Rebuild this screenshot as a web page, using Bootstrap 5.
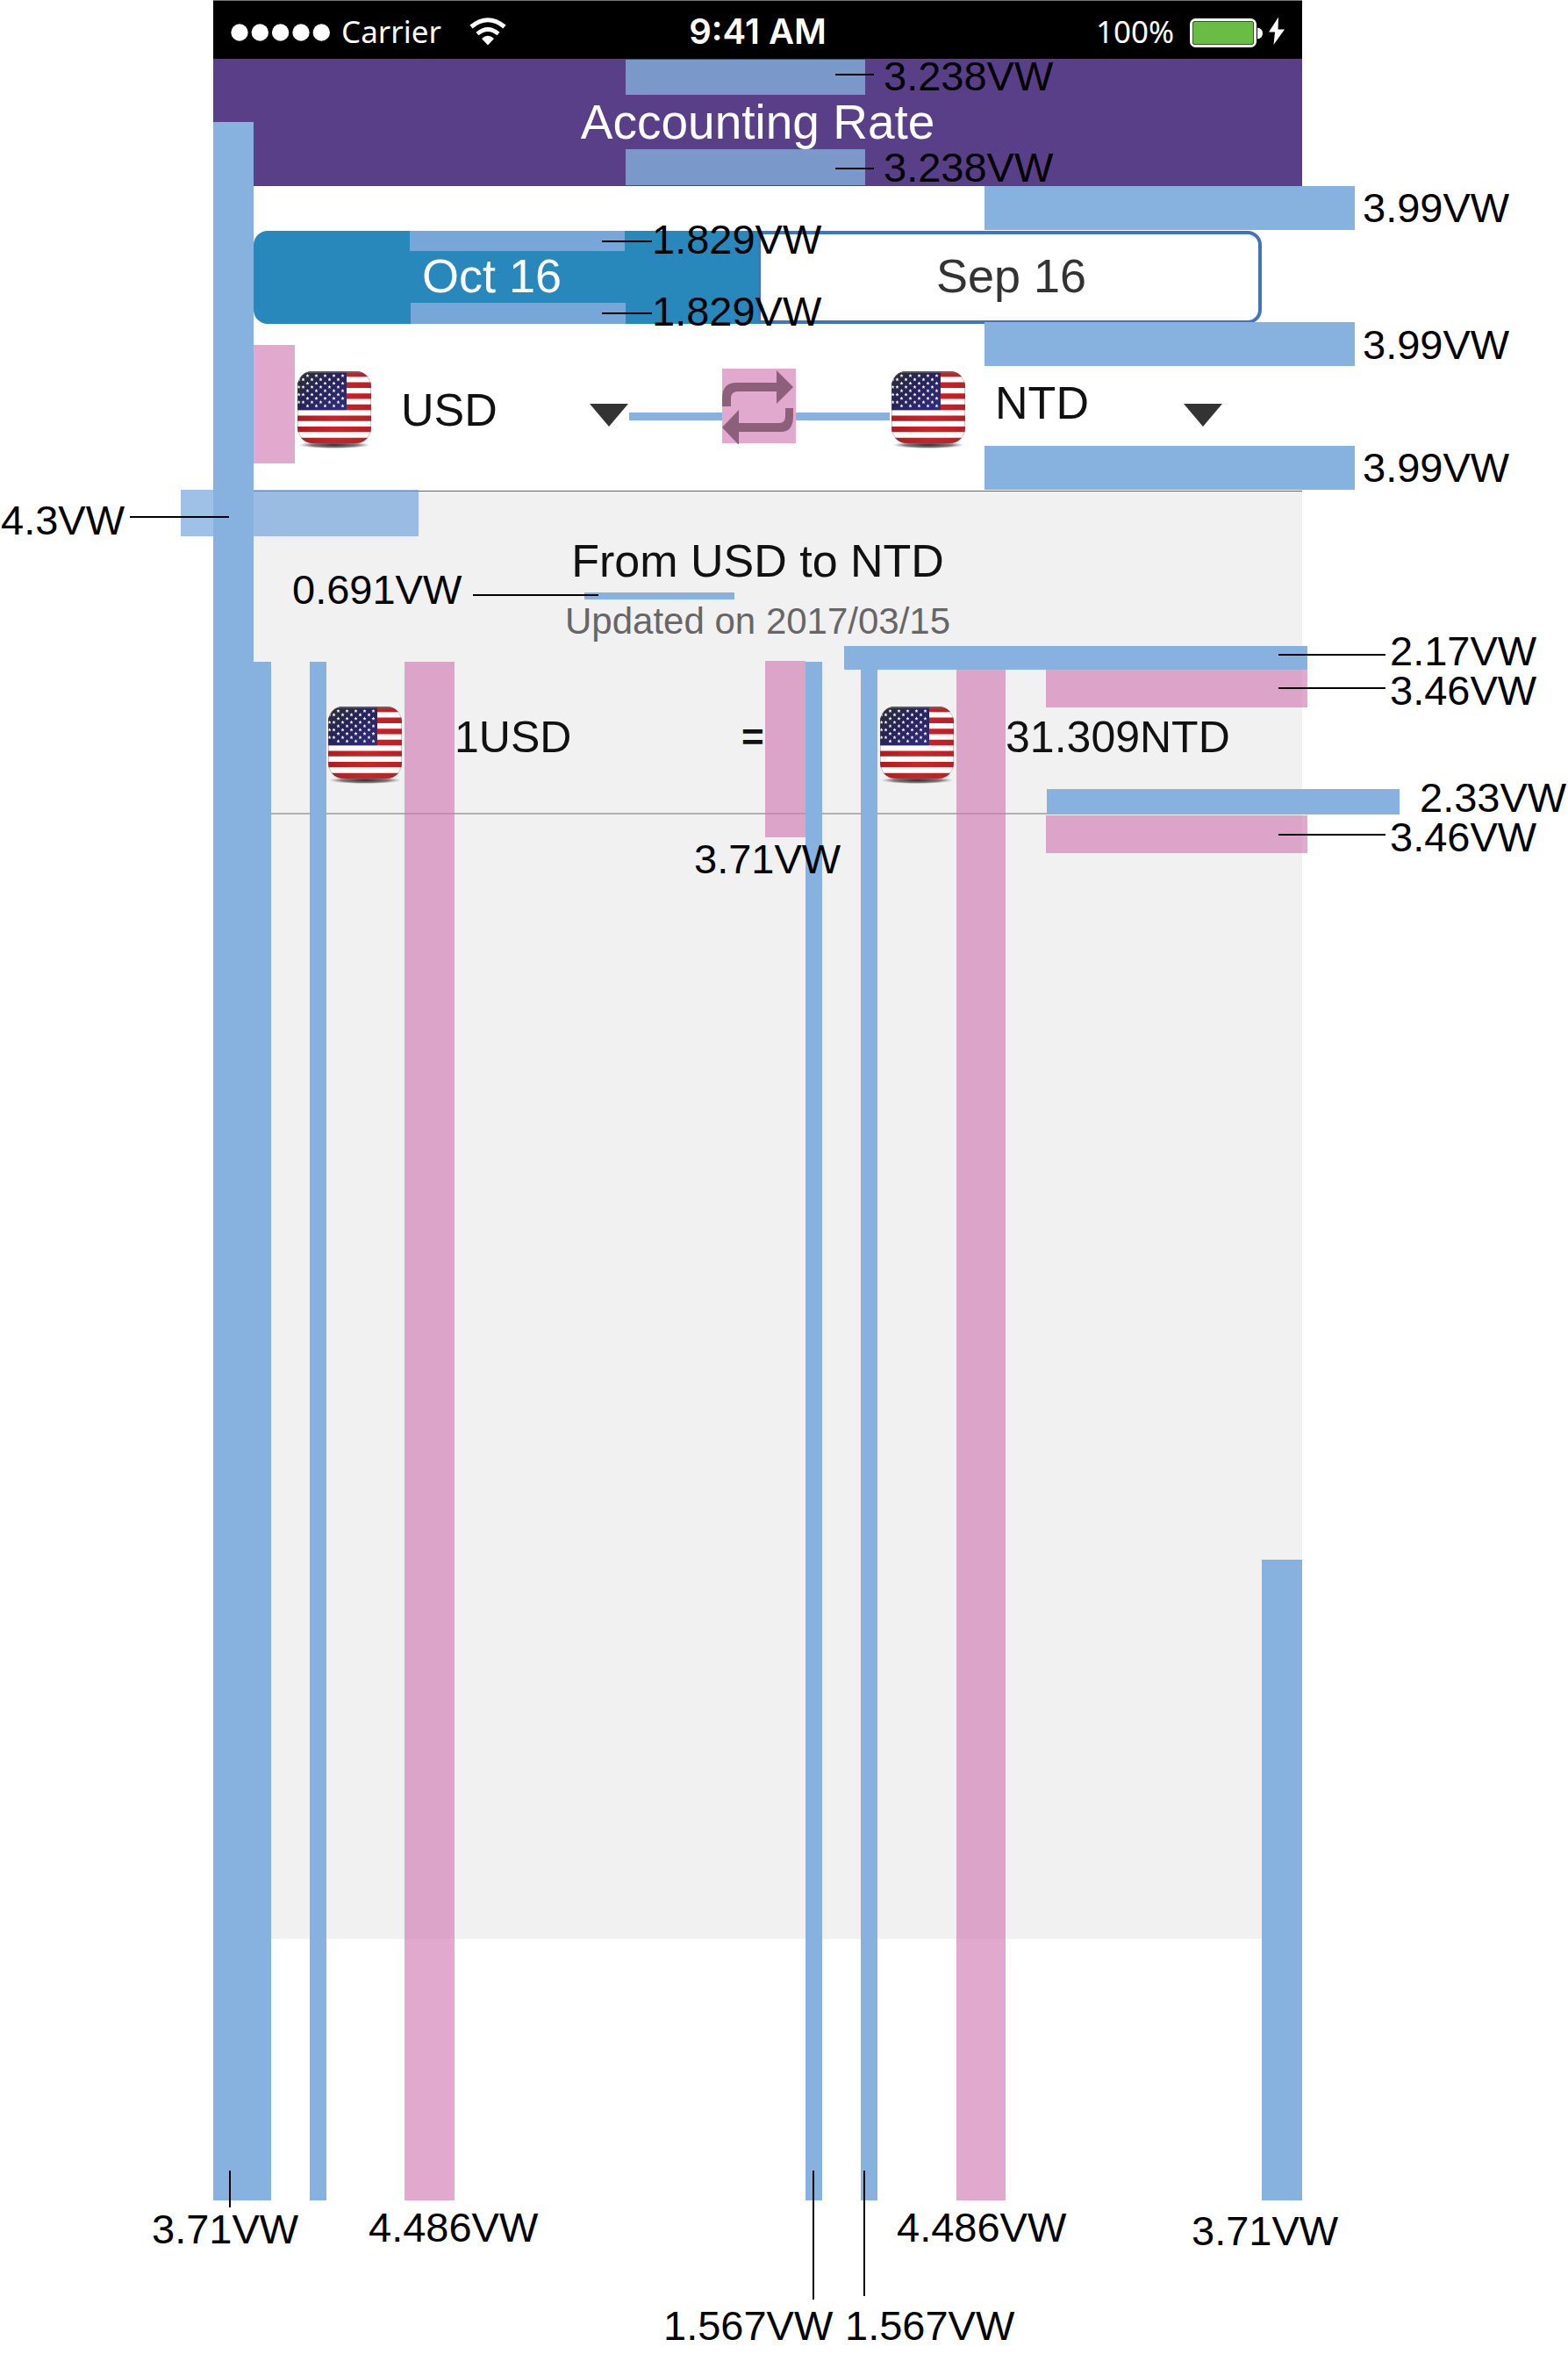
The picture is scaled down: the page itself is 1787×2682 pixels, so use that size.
<!DOCTYPE html>
<html lang="en">
<head>
<meta charset="utf-8">
<meta name="viewport" content="width=device-width, initial-scale=1">
<title>Accounting Rate – spacing spec</title>
<link href="https://cdn.jsdelivr.net/npm/bootstrap@5.3.0/dist/css/bootstrap.min.css" rel="stylesheet">
<style>
  body { background: #fff; color: #111; font-family: "Liberation Sans", Arial, sans-serif; }
  .sheet { overflow: hidden; }
  .phone { width: 69.45%; margin-left: 13.6%; }

  /* status bar */
  .statusbar { height: 67px; padding: 0 20px; background: #000; color: #fff; border-top: 1px solid #777; font: 35px/48px "Noto Sans", sans-serif; }
  .statusbar .clock { font: 600 40px/48px Inter, sans-serif; }
  .statusbar .reading { padding-top: 3px; }
  .dots { margin-top: 6px; }
  .wifi { margin-left: 32px; }
  .side { flex: 1 1 0; }

  .titlebar { height: 145px; padding-bottom: 2px; background: #593f87; color: #fff; }
  .titlebar h1 { font-size: 55px; line-height: 64px; }

  /* month switch */
  .months { height: 106px; margin: 51px 3.71% 0; }
  .months .btn { font-size: 54px; line-height: 64px; padding: 0 0 4px 4px; border: 4px solid #4174bb; border-radius: 16px; color: #333; background: #fff; }
  .months .btn.active { background: #2888bc; border-color: #2888bc; color: #fff; padding-right: 36px; }

  /* currency pickers */
  .pickers { display: grid; height: 190px; align-items: center;
    grid-template-columns: 96fr 84fr 34fr 259fr 107fr 84fr 109fr 84fr 34fr 259fr 91fr; }
  .c2 { grid-column: 2; } .c4 { grid-column: 4; } .c6 { grid-column: 6; } .c8 { grid-column: 8; } .c10 { grid-column: 10; }
  .picker { display: grid; min-width: 0; align-items: center; }
  .picker > * { grid-area: 1 / 1; }
  .picker select { appearance: none; border: 0; background: none; color: #111; font-size: 52px; line-height: 64px; padding: 6px 0 0; width: 100%; }
  .picker.raised select { padding: 0 0 10px; }
  .caret { width: 44px; height: 26px; margin-top: 17px; justify-self: end; pointer-events: none; }
  .swap { border: 0; padding: 0; background: #e0a9cd; height: 85px; margin-top: -3px; }
  .swap svg, .flag { display: block; width: 100%; }
  .flag { height: 90px; margin-top: 8px; }

  /* result panel */
  .panel { min-height: 1650px; padding-top: 47px; background: #f1f1f1; border-top: 1px solid #666; }
  .panel h2 { font-size: 52px; line-height: 64px; margin-bottom: 13px; }
  .updated { font-size: 42px; line-height: 48px; color: #666; margin-bottom: 33px; }
  .rate { display: grid; height: 161px; align-items: center; font-size: 50px; line-height: 64px; white-space: nowrap;
    grid-template-columns: 131fr 84fr 60fr 327fr 27fr 131fr 84fr 59fr 338fr; }
  .rate span { padding-bottom: 11px; }
  .rate .eq { font-size: 44px; font-weight: 700; grid-column: 5; }
  .c7 { grid-column: 7; } .c9 { grid-column: 9; }
  .rule { margin: 0 3.71% 0 5.24%; border-top: 2px solid #b0b0b0; opacity: 1; }

  /* redline layer: x and w are shares of the 1787-unit sheet, y and h are pixels */
  .redlines { position: absolute; inset: 0; z-index: 3; pointer-events: none; }
  .gauge, .tag-text { position: absolute; left: calc(var(--x) / 1787 * 100%); top: calc(var(--y) * 1px); }
  .gauge { width: calc(var(--w) / 1787 * 100%); height: calc(var(--h) * 1px); background: #87b2df; }
  .gauge.pink { background: rgba(207,123,178,.65); }
  .gauge.on-purple { background: #7b98cb; }
  .gauge.on-tab { background: #76a7d8; }
  .gauge.sheer { background: rgba(109,160,218,.65); }
  .gauge.leader { background: #000; height: 2px; }
  .gauge.drop { background: #000; width: 2px; }
  .tag-text { font-size: 47px; line-height: 44px; padding: 2px 0 0 1px; color: #000; white-space: nowrap; }
</style>
</head>
<body>
<svg width="0" height="0" class="position-absolute" aria-hidden="true">
  <defs>
    <clipPath id="fc"><rect width="84" height="82" rx="17"/></clipPath>
    <linearGradient id="dk" x1="0" y1="0" x2="1" y2="1"><stop offset="0" stop-color="#2e3033"/><stop offset=".45" stop-color="#26235a"/><stop offset="1" stop-color="#322d80"/></linearGradient>
    <linearGradient id="rd" gradientUnits="userSpaceOnUse" x1="0" y1="0" x2="84" y2="0"><stop offset="0" stop-color="#b01b22"/><stop offset=".5" stop-color="#d02128"/><stop offset="1" stop-color="#bb1f26"/></linearGradient>
    <radialGradient id="gs"><stop offset="0" stop-color="#222" stop-opacity=".95"/><stop offset=".65" stop-color="#444" stop-opacity=".7"/><stop offset="1" stop-color="#666" stop-opacity="0"/></radialGradient>
    <path id="star" fill="#fff" d="M0-2.100L.6-.7 2-.6.9.400 1.300 1.900 0 1.100-1.300 1.900-.9.400-2-.6-.6-.7z"/>
    <g id="rowa"><use href="#star" x="11.500"/><use href="#star" x="21.500"/><use href="#star" x="31.500"/><use href="#star" x="41.500"/><use href="#star" x="51.500"/></g>
    <g id="rowb"><use href="#star" x="1.500"/><use href="#star" x="6.500" y="0"/><use href="#star" x="16.500"/><use href="#star" x="26.500"/><use href="#star" x="36.500"/><use href="#star" x="46.500"/></g>
    <symbol id="flag" viewBox="0 0 84 90">
      <ellipse cx="42" cy="84" rx="41" ry="4" fill="url(#gs)"/>
      <g clip-path="url(#fc)">
        <rect width="84" height="82" fill="#fff"/>
        <path d="M0 3.150h84M0 15.750h84M0 28.400h84M0 41h84M0 53.600h84M0 66.200h84M0 78.900h84" stroke="url(#rd)" stroke-width="6.300"/>
        <rect width="56" height="44.200" fill="url(#dk)"/>
        <use href="#rowa" y="5"/><use href="#rowb" y="9.300"/><use href="#rowa" y="13.600"/><use href="#rowb" y="17.900"/><use href="#rowa" y="22.200"/><use href="#rowb" y="26.500"/><use href="#rowa" y="30.800"/><use href="#rowb" y="35.100"/><use href="#rowa" y="39.400"/>
        <rect width="84" height="2" fill="#777" opacity=".6"/>
      </g>
      <rect x=".5" y=".5" width="83" height="81" rx="16.500" fill="none" stroke="#555" stroke-opacity=".35"/>
    </symbol>
  </defs>
</svg>

<main class="sheet position-relative min-vh-100">
  <section class="phone" aria-label="Accounting Rate screen">
    <div class="statusbar d-flex align-items-center">
      <div class="side d-flex align-items-center">
        <svg width="114" height="20" viewBox="0 0 114 20" fill="#fff" class="dots me-2"><circle cx="10" cy="10" r="9.700"/><circle cx="33.300" cy="10" r="9.700"/><circle cx="56.600" cy="10" r="9.700"/><circle cx="80" cy="10" r="9.700"/><circle cx="103.300" cy="10" r="9.700"/></svg>
        <span class="reading ps-1">Carrier</span>
        <svg width="42" height="32" viewBox="0 0 42 32" class="wifi mt-1" fill="none" stroke="#fff" stroke-width="5"><path d="M2 10.500Q21-5 40 10.500"/><path d="M9 18.500Q21 8.500 33 18.500" stroke-width="4.800"/><path d="M14 24Q21 17.500 28 24L21 31.500z" fill="#fff" stroke="none"/></svg>
      </div>
      <span class="clock mt-1">9:41 AM</span>
      <div class="side d-flex align-items-center justify-content-end">
        <span class="reading">100%</span>
        <svg width="110" height="36" viewBox="0 0 110 36" class="ms-3 mt-1"><rect x="3.500" y="4.500" width="73" height="30" rx="5" fill="none" stroke="#fff" stroke-width="3"/><rect x="5.500" y="6.500" width="69" height="26" rx="2" fill="#69bd45" stroke="#2f5e1c"/><path d="M79 13.500q6 1 6 6.500t-6 6.500z" fill="#fff"/><path d="M103 1.500L92 18.500h7l-1.500 14.500L110 15.500h-7.500z" fill="#fff"/></svg>
      </div>
    </div>
    <header class="titlebar d-flex align-items-center justify-content-center">
      <h1 class="m-0 fw-normal">Accounting Rate</h1>
    </header>
    <div class="months btn-group d-flex" role="group" aria-label="Month">
      <button type="button" class="btn active w-50">Oct 16</button>
      <button type="button" class="btn w-50">Sep 16</button>
    </div>
    <form class="pickers">
      <svg class="flag c2" role="img" aria-label="US flag"><use href="#flag"/></svg>
      <div class="picker c4">
        <select aria-label="From currency"><option>USD</option></select>
        <svg class="caret" viewBox="0 0 44 26"><path d="M0 0h44L22 26z" fill="#333"/></svg>
      </div>
      <button type="button" class="swap c6" aria-label="Swap currencies">
        <svg viewBox="0 0 84 86" height="86" preserveAspectRatio="none" fill="#8e5f7b"><path d="M0 43V34Q0 16 16 16H62V2L81 21 62 40V26H18Q10 26 10 34V43z"/><path d="M81 45V54Q81 72 67 72H19V87L0 67 19 47V62H65Q72 62 72 54V45z"/></svg>
      </button>
      <svg class="flag c8" role="img" aria-label="US flag"><use href="#flag"/></svg>
      <div class="picker raised c10">
        <select aria-label="To currency"><option>NTD</option></select>
        <svg class="caret" viewBox="0 0 44 26"><path d="M0 0h44L22 26z" fill="#333"/></svg>
      </div>
    </form>
    <section class="panel">
      <h2 class="text-center fw-normal">From USD to NTD</h2>
      <p class="updated text-center">Updated on 2017/03/15</p>
      <div class="rate">
        <svg class="flag c2" role="img" aria-label="US flag"><use href="#flag"/></svg>
        <span class="c4">1USD</span>
        <span class="eq">=</span>
        <svg class="flag c7" role="img" aria-label="US flag"><use href="#flag"/></svg>
        <span class="c9">31.309NTD</span>
      </div>
      <hr class="rule">
    </section>
  </section>

  <div class="redlines">
    <!-- title bar -->
    <div class="gauge on-purple" style="--x:713;--y:68;--w:273;--h:40"></div>
    <div class="gauge on-purple" style="--x:713;--y:170;--w:273;--h:41"></div>
    <div class="gauge leader" style="--x:952;--y:84;--w:44"></div>
    <div class="gauge leader" style="--x:952;--y:191;--w:44"></div>
    <span class="tag-text" style="--x:1006;--y:63">3.238VW</span>
    <span class="tag-text" style="--x:1006;--y:167">3.238VW</span>

    <!-- month switch -->
    <div class="gauge on-tab" style="--x:467;--y:263;--w:245;--h:23"></div>
    <div class="gauge on-tab" style="--x:468;--y:345;--w:245;--h:24"></div>
    <div class="gauge leader" style="--x:686;--y:274;--w:57"></div>
    <div class="gauge leader" style="--x:686;--y:356;--w:57"></div>
    <span class="tag-text" style="--x:742;--y:249">1.829VW</span>
    <span class="tag-text" style="--x:742;--y:331">1.829VW</span>

    <div class="gauge" style="--x:1122;--y:212;--w:422;--h:50"></div>
    <div class="gauge" style="--x:1122;--y:367;--w:422;--h:50"></div>
    <div class="gauge" style="--x:1122;--y:508;--w:422;--h:50"></div>
    <span class="tag-text" style="--x:1552;--y:213">3.99VW</span>
    <span class="tag-text" style="--x:1552;--y:369">3.99VW</span>
    <span class="tag-text" style="--x:1552;--y:509">3.99VW</span>

    <!-- currency pickers -->
    <div class="gauge pink" style="--x:289;--y:393;--w:47;--h:135"></div>
    <div class="gauge" style="--x:717;--y:470;--w:106;--h:9"></div>
    <div class="gauge" style="--x:907;--y:470;--w:107;--h:9"></div>

    <!-- panel heading -->
    <div class="gauge sheer" style="--x:206;--y:558;--w:271;--h:53"></div>
    <div class="gauge" style="--x:666;--y:675;--w:171;--h:8"></div>
    <div class="gauge leader" style="--x:539;--y:677;--w:143"></div>
    <span class="tag-text" style="--x:332;--y:648">0.691VW</span>

    <!-- vertical rails -->
    <div class="gauge" style="--x:243;--y:139;--w:46;--h:2368"></div>
    <div class="gauge" style="--x:243;--y:754;--w:66;--h:1753"></div>
    <div class="gauge" style="--x:353;--y:754;--w:19;--h:1753"></div>
    <div class="gauge pink" style="--x:461;--y:754;--w:57;--h:1753"></div>
    <div class="gauge pink" style="--x:872;--y:753;--w:46;--h:201"></div>
    <div class="gauge" style="--x:918;--y:754;--w:19;--h:1753"></div>
    <div class="gauge" style="--x:981;--y:754;--w:19;--h:1753"></div>
    <div class="gauge pink" style="--x:1090;--y:763;--w:56;--h:1744"></div>
    <div class="gauge" style="--x:1438;--y:1777;--w:46;--h:730"></div>

    <!-- rate row -->
    <div class="gauge" style="--x:962;--y:736;--w:528;--h:27"></div>
    <div class="gauge pink" style="--x:1192;--y:763;--w:298;--h:43"></div>
    <div class="gauge" style="--x:1193;--y:899;--w:402;--h:29"></div>
    <div class="gauge pink" style="--x:1192;--y:929;--w:298;--h:43"></div>
    <div class="gauge leader" style="--x:1457;--y:745;--w:122"></div>
    <div class="gauge leader" style="--x:1457;--y:783;--w:122"></div>
    <div class="gauge leader" style="--x:1457;--y:950;--w:122"></div>
    <span class="tag-text" style="--x:1583;--y:718">2.17VW</span>
    <span class="tag-text" style="--x:1583;--y:763">3.46VW</span>
    <span class="tag-text" style="--x:1617;--y:885">2.33VW</span>
    <span class="tag-text" style="--x:1583;--y:930">3.46VW</span>
    <span class="tag-text" style="--x:790;--y:955">3.71VW</span>

    <div class="gauge leader" style="--x:148;--y:588;--w:113"></div>
    <span class="tag-text" style="--x:0;--y:569">4.3VW</span>

    <!-- rail captions -->
    <div class="gauge drop" style="--x:261;--y:2473;--h:42"></div>
    <div class="gauge drop" style="--x:926;--y:2473;--h:147"></div>
    <div class="gauge drop" style="--x:984;--y:2473;--h:143"></div>
    <span class="tag-text" style="--x:172;--y:2516">3.71VW</span>
    <span class="tag-text" style="--x:419;--y:2514">4.486VW</span>
    <span class="tag-text" style="--x:1021;--y:2514">4.486VW</span>
    <span class="tag-text" style="--x:1357;--y:2518">3.71VW</span>
    <span class="tag-text" style="--x:755;--y:2626">1.567VW</span>
    <span class="tag-text" style="--x:962;--y:2626">1.567VW</span>
  </div>
</main>
<script src="https://cdn.jsdelivr.net/npm/bootstrap@5.3.0/dist/js/bootstrap.bundle.min.js"></script>
</body>
</html>
